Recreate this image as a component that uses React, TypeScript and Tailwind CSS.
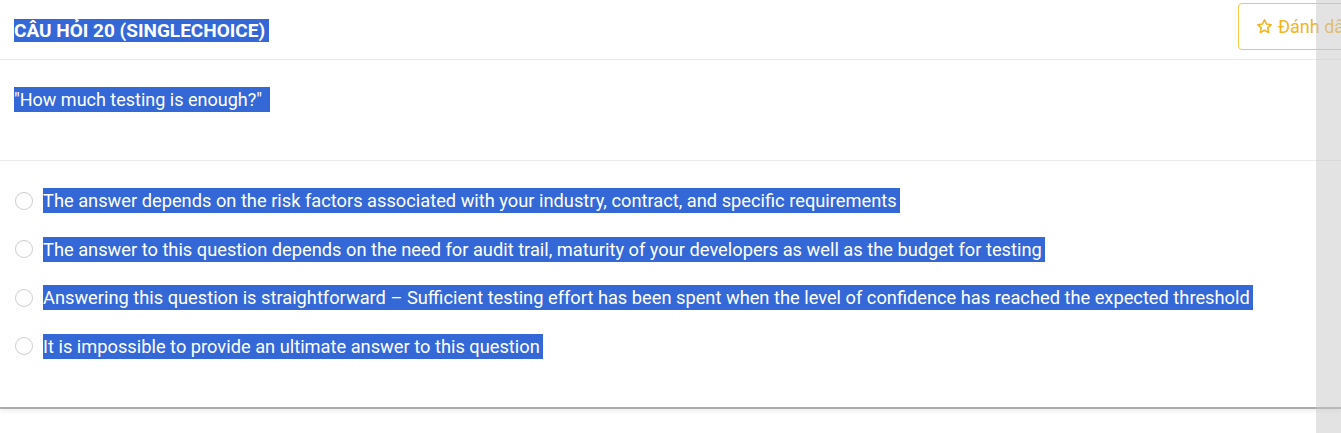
import React from 'react';

const OPTIONS = [
  'The answer depends on the risk factors associated with your industry, contract, and specific requirements',
  'The answer to this question depends on the need for audit trail, maturity of your developers as well as the budget for testing',
  'Answering this question is straightforward – Sufficient testing effort has been spent when the level of confidence has reached the expected threshold',
  'It is impossible to provide an ultimate answer to this question',
];

function StarIcon() {
  return (
    <svg width="17" height="17" viewBox="0 0 24 24" fill="none" stroke="currentColor" strokeWidth="2.2" strokeLinejoin="round">
      <path d="M12 2.5l2.9 6.1 6.6.8-4.9 4.6 1.3 6.6L12 17.3l-5.9 3.3 1.3-6.6-4.9-4.6 6.6-.8z" />
    </svg>
  );
}

export default function App() {
  return (
    <div
      className="relative w-[1341px] h-[433px] overflow-hidden bg-white text-white"
      style={{ fontFamily: 'Roboto, "Liberation Sans", sans-serif' }}
    >
      <div className="border-b-2 border-[#ababab] shadow-[0_3px_4px_rgba(0,0,0,0.06)] h-[409px]">
        {/* header */}
        <div className="flex w-[1380px] justify-between items-start h-[60px] border-b border-[#ebebeb] pl-[14px]">
          <span className="mt-[19px] bg-[#3468d6] text-[19px] font-bold leading-[23px] pr-[4px]">
            CÂU HỎI 20 (SINGLECHOICE)
          </span>
          <button className="mt-[3px] w-[142px] h-[47px] shrink-0 flex items-center gap-[5px] pl-[17px] rounded-[4px] border border-[#f3c94a] text-[#f2b51d] text-[18px]">
            <StarIcon />
            <span>Đánh dấu</span>
          </button>
        </div>

        {/* question */}
        <div className="h-[101px] border-b border-[#ebebeb] pl-[14px] pt-[27px]">
          <span className="inline-block bg-[#3468d6] text-[18px] leading-[25px] pr-[8px]">
            "How much testing is enough?"
          </span>
        </div>

        {/* options */}
        <div className="flex flex-col gap-[23.5px] pl-[15px] pt-[27px]">
          {OPTIONS.map((opt) => (
            <label key={opt} className="flex items-center gap-[10px]">
              <span className="w-[18px] h-[18px] rounded-full border border-[#cdcdcd] shrink-0" />
              <span className="bg-[#3468d6] text-[18.25px] leading-[25px] pr-[3px]">{opt}</span>
            </label>
          ))}
        </div>
      </div>

      {/* scrollbar track */}
      <div className="absolute top-0 right-0 w-[25px] h-full bg-[#c8c8c8]/50" />
    </div>
  );
}
